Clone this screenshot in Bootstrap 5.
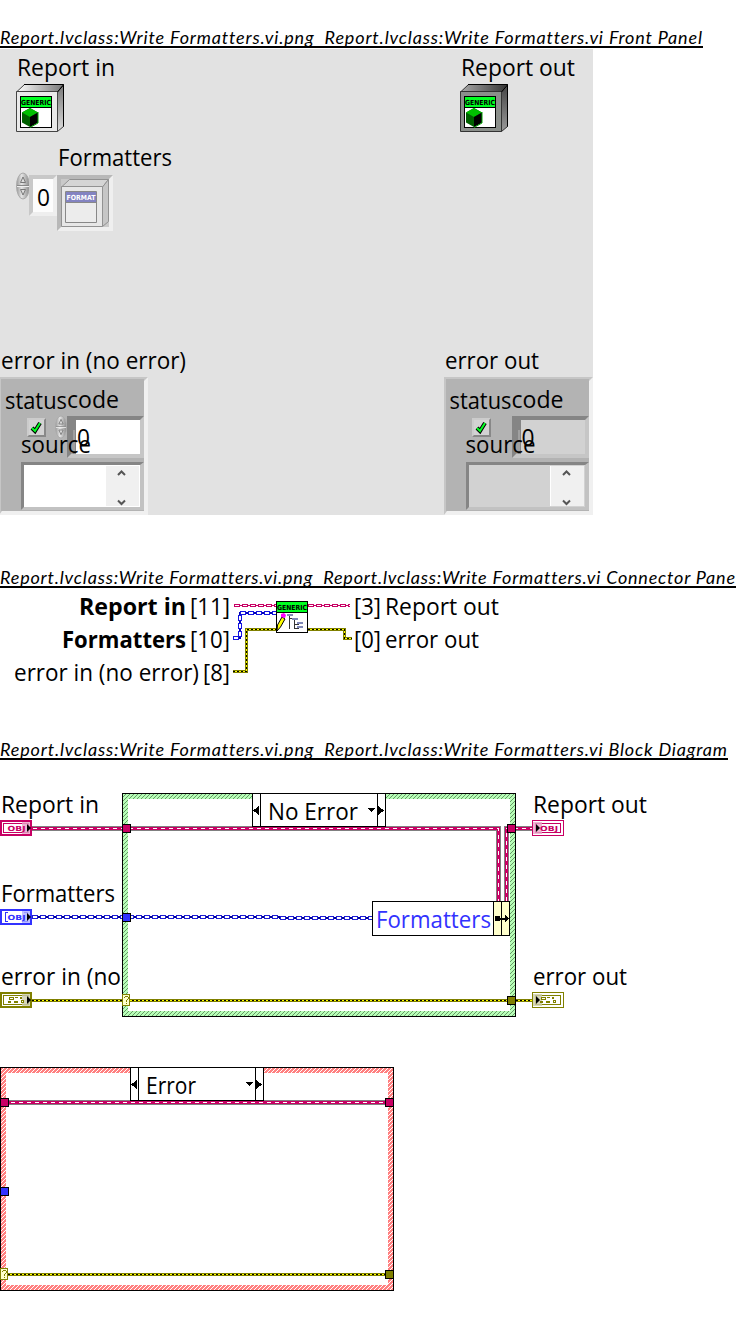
<!DOCTYPE html>
<html lang="en">
<head>
<meta charset="utf-8">
<meta name="viewport" content="width=device-width, initial-scale=1">
<title>Report.lvclass:Write Formatters.vi</title>
<link rel="stylesheet" href="https://cdn.jsdelivr.net/npm/bootstrap@5.3.0/dist/css/bootstrap.min.css">
<style>
body{background:#fff;color:#000;font-family:"Open Sans","Noto Sans",sans-serif}
.vi-title{font:italic 400 18px/24px Lato,"Liberation Sans",sans-serif;height:23px;border-bottom:2px solid #000;white-space:pre}
.vi-title svg{display:block;height:21px}
.gap-top{padding-top:25px}
.gap-pane{padding-top:50px}
.gap-diagram{padding-top:44px}
svg text{font-size:23px;fill:#000;font-variant-ligatures:none}
svg .bold{font-weight:700}
svg .heading{font:italic 400 18px Lato,"Liberation Sans",sans-serif;font-variant-ligatures:none}
svg .tiny{font:700 7px "DejaVu Sans",sans-serif}
.px{shape-rendering:crispEdges}
</style>
</head>
<body>
<svg width="0" height="0" class="position-absolute" aria-hidden="true">
<defs>
<linearGradient id="topLight" x1="0" x2="1"><stop stop-color="#fff"/><stop offset="1" stop-color="#777"/></linearGradient>
<linearGradient id="sideLight" x1="0" x2="0" y1="0" y2="1"><stop stop-color="#777"/><stop offset="1" stop-color="#ddd"/></linearGradient>
<linearGradient id="topDark" x1="0" x2="1"><stop stop-color="#aaa"/><stop offset="1" stop-color="#333"/></linearGradient>
<linearGradient id="sideDark" x1="0" x2="0" y1="0" y2="1"><stop stop-color="#444"/><stop offset="1" stop-color="#999"/></linearGradient>
<linearGradient id="knob" x1="0" x2="1"><stop stop-color="#999"/><stop offset=".4" stop-color="#e4e4e4"/><stop offset="1" stop-color="#888"/></linearGradient>
<pattern id="okHatch" width="4" height="4" patternUnits="userSpaceOnUse" class="px"><path fill="#b8ffb8" d="M0 0h4v4H0z"/><path fill="#669966" d="M3 0h1v1H3zM2 1h1v1H2zM1 2h1v1H1zM0 3h1v1H0z"/></pattern>
<pattern id="errHatch" width="4" height="4" patternUnits="userSpaceOnUse" class="px"><path fill="#ff8080" d="M0 0h4v4H0z"/><path fill="#fff" d="M3 0h1v1H3zM2 1h1v1H2zM1 2h1v1H1zM0 3h1v1H0z"/></pattern>
<g id="label">
  <path d="M.5.5h31v31H.5z" fill="#fff" stroke="#000" class="px"/><path d="M1 1h30v10H1z" fill="#00ff21" class="px"/><path d="M1 11.500h30" stroke="#000" class="px"/>
  <text class="tiny" x="1" y="9" textLength="30" lengthAdjust="spacingAndGlyphs">GENERIC</text>
</g>
<g id="cube"><path d="M10 12l8 4.500v10L10 31l-8-4.500v-10z" fill="#006000"/><path d="M10 12l8 4.500-8 4.500-8-4.500z" fill="#00c000"/><path d="M10 21l8-4.500v10L10 31z" fill="#000"/><path d="M18 16v11l-8 4.500" fill="none" stroke="#00a000"/></g>
<g id="spinner"><ellipse cx="0" cy="0" rx="6.500" ry="13" fill="url(#knob)" stroke="#aaa"/><path d="M-6-.5H6" stroke="#888"/><path d="M-6 .5H6" stroke="#eee"/><path d="M-2.500-3.500L0-9l2.500 5.500zM-2.500 3.500L0 9l2.500-5.500z" fill="#ddd" stroke="#777"/></g>
<g id="cluster">
  <path d="M-1 377h149v138H-1z" fill="#f0f0f0"/><path d="M-1 377h149l-4 4v130H2l-3 4z" fill="#c6c6c6"/><path d="M1 379h143v132H1z" fill="#b3b3b3"/>
  <path d="M67 416h77v42H67z" fill="#c6c6c6"/><path d="M67 416h77l-4 4H76v34h-5l-4 4z" fill="#858585"/>
  <path d="M21 462h123v48H21z" fill="#c2c2c2"/><path d="M21 462h123l-4 3H24v42l-3 3z" fill="#858585"/>
  <path d="M27 418h19v19H27z" fill="#888"/><path d="M27 418h19l-2 2v15H29l-2 2z" fill="#ccc"/><path d="M29 420h15v15H29z" fill="#d3d3d3"/>
  <path d="M32 428l3 3 5-8" stroke="#000" stroke-width="4" fill="none"/><path d="M32 428l3 3 5-8" stroke="#00ff21" stroke-width="2" fill="none"/>
  <path d="M72 454v-12M74 452v-22" stroke="#bbb"/>
</g>
<g id="scroll"><path d="M106 466h33v40h-33z" fill="#f0f0f0"/><path d="M118 475l3.500-3.500 3.500 3.500M118 500.500l3.500 3.500 3.500-3.500" stroke="#555" stroke-width="2" fill="none"/></g>
<g id="query" class="px"><path d="M.5.5h7v11h-7z" fill="#ffffcc" stroke="#808000"/><path d="M2 3h1V2h3v1h1v2H6v1H5v2H4V6h1V5h1V3H3v1H2zM4 9h1v1H4z" fill="#808000"/></g>
<g id="selector"><path d="M.5.5h133v33H.5zM8.500.5v33M125.500.5v33" fill="#fff" stroke="#000"/><path d="M7 13v9l-6-4.500zM126 13v9l6-4.500zM115 15h8l-4 4z" fill="#000"/></g>
<g id="errGlyph" class="px" fill="#808000"><path d="M9 5h5v3H9zM15 5h3v1h-3zM20 5h2v2h-2zM8 9h3v2H8zM14 9h4v2h-4zM21 8h3v3h-3z"/><path d="M10 6h3v1h-3zM22 9h1v1h-1z" fill="#fff"/></g>
</defs>
</svg>
<main>
<section class="gap-top">
<h1 class="vi-title m-0" style="width:703px"><svg width="703" height="21"><text class="heading" x="0" y="19" textLength="702" xml:space="preserve">Report.lvclass:Write Formatters.vi.png  Report.lvclass:Write Formatters.vi Front Panel</text></svg></h1>
<svg class="d-block" style="margin-top:1px" width="593" height="466" viewBox="0 49 593 466">
<path fill="#e2e2e2" d="M0 49h593v466H0z"/>
<text x="17" y="76" textLength="98" lengthAdjust="spacingAndGlyphs">Report in</text>
<text x="461" y="76" textLength="114" lengthAdjust="spacingAndGlyphs">Report out</text>
<g stroke="#444"><path d="M16.500 92l8-7.500h39l-6 7.500z" fill="url(#topLight)"/><path d="M57.500 92l6-7.500v42l-6 5z" fill="url(#sideLight)"/><path d="M16.500 91.500h41v40h-41z" fill="#eaeaea"/></g><path d="M24 84.500h39.500v42M57.500 92l6-7" stroke="#000" fill="none"/>
<use href="#label" x="20" y="96"/><use href="#cube" x="20" y="96"/>
<g transform="translate(444)"><g stroke="#333"><path d="M16.500 92l8-7.500h39l-6 7.500z" fill="url(#topDark)"/><path d="M57.500 92l6-7.500v42l-6 5z" fill="url(#sideDark)"/><path d="M16.500 91.500h41v40h-41z" fill="#8b8f8b"/></g><path d="M24 84.500h39.500v42M57.500 92l6-7" stroke="#000" fill="none"/><use href="#label" x="20" y="96"/><use href="#cube" x="20" y="96"/></g>
<text x="58" y="166" textLength="114" lengthAdjust="spacingAndGlyphs">Formatters</text>
<use href="#spinner" x="23" y="186"/>
<path d="M29 175h28v41H29z" fill="#eee"/><path d="M29 175h28l-4 4H33v33l-4 4z" fill="#c8c8c8"/><path d="M33 179h20v33H33z" fill="#fcfcfc"/>
<path d="M57 175h56v56H57z" fill="#efefef"/><path d="M57 175h56l-4 4v48H61l-4 4z" fill="#b8b8b8"/><path d="M61 179h48v48H61z" fill="#c9c9c9"/>
<g stroke="#929292"><path d="M61.500 187l8-7.500h39l-6 7.500z" fill="#d5d5d5"/><path d="M102.500 187l6-7.500v42l-6 5z" fill="#c6c6c6"/><path d="M61.500 186.500h41v40h-41z" fill="#e7e7e7"/><path d="M65.500 191.500h31v31h-31z" fill="#ececec" stroke="#888"/></g>
<path d="M66 192h30v10H66z" fill="#8383c1"/><path d="M66 202.500h30" stroke="#888"/><text class="tiny" x="66.500" y="199.500" textLength="29" lengthAdjust="spacingAndGlyphs" style="fill:#fff">FORMAT</text>
<text x="37" y="206" textLength="13" lengthAdjust="spacingAndGlyphs">0</text>
<text x="1" y="369" textLength="185" lengthAdjust="spacingAndGlyphs">error in (no error)</text>
<text x="445" y="369" textLength="94" lengthAdjust="spacingAndGlyphs">error out</text>
<use href="#cluster"/><path d="M76 420h64v34H76zM24 465h116v42H24z" fill="#fff"/><use href="#scroll"/><use href="#spinner" transform="translate(61 427) scale(.85)"/>
<use href="#cluster" x="445"/><path d="M521 420h64v34h-64zM469 465h116v42H469z" fill="#d2d2d2"/><use href="#scroll" x="445"/>
<path d="M550.500 466v40" stroke="#fff"/>
<g><text x="5" y="409" textLength="62" lengthAdjust="spacingAndGlyphs">status</text><text x="67" y="408" textLength="52" lengthAdjust="spacingAndGlyphs">code</text><text x="77" y="446" textLength="13" lengthAdjust="spacingAndGlyphs">0</text><text x="21" y="453" textLength="70" lengthAdjust="spacingAndGlyphs">source</text></g>
<g transform="translate(444.500)"><text x="5" y="409" textLength="62" lengthAdjust="spacingAndGlyphs">status</text><text x="67" y="408" textLength="52" lengthAdjust="spacingAndGlyphs">code</text><text x="77" y="446" textLength="13" lengthAdjust="spacingAndGlyphs">0</text><text x="21" y="453" textLength="70" lengthAdjust="spacingAndGlyphs">source</text></g>
</svg>
</section>
<section class="gap-pane">
<h1 class="vi-title m-0" style="width:736px"><svg width="736" height="21"><text class="heading" x="0" y="19" textLength="735" xml:space="preserve">Report.lvclass:Write Formatters.vi.png  Report.lvclass:Write Formatters.vi Connector Pane</text></svg></h1>
<svg class="d-block" width="737" height="105" viewBox="0 588 737 105">
<text class="bold" x="79" y="615" textLength="107" lengthAdjust="spacingAndGlyphs">Report in</text><text x="190" y="615" textLength="40" lengthAdjust="spacingAndGlyphs">[11]</text>
<text class="bold" x="62" y="648" textLength="124" lengthAdjust="spacingAndGlyphs">Formatters</text><text x="190" y="648" textLength="40" lengthAdjust="spacingAndGlyphs">[10]</text>
<text x="14" y="681" textLength="185" lengthAdjust="spacingAndGlyphs">error in (no error)</text><text x="203" y="681" textLength="27" lengthAdjust="spacingAndGlyphs">[8]</text>
<text x="354" y="615" textLength="27" lengthAdjust="spacingAndGlyphs">[3]</text><text x="385" y="615" textLength="114" lengthAdjust="spacingAndGlyphs">Report out</text>
<text x="354" y="648" textLength="27" lengthAdjust="spacingAndGlyphs">[0]</text><text x="385" y="648" textLength="94" lengthAdjust="spacingAndGlyphs">error out</text>
<g class="px" fill="none">
<path d="M234 605.500h42M308 605.500h42" stroke="#c80064"/><path d="M234 605.500h42M308 605.500h42" stroke="#c80064" stroke-width="3" stroke-dasharray="6 2"/><path d="M235 605.500h41M309 605.500h41" stroke="#fff" stroke-dasharray="4 4"/>
<path d="M233 638h7v-25H276" stroke="#0000b4" stroke-width="2"/><path d="M233 638h7v-25H276" stroke="#1414e0" stroke-width="4" stroke-dasharray="6 2"/><path d="M234 638h6v-25H276" stroke="#fff" stroke-width="2" stroke-dasharray="4 4"/>
<path d="M233 671.500h13.500v-42H276M308 629.500h36.500v9h7" stroke="#808000" stroke-width="3"/><path d="M233 671.500h13.500v-42H276M308 629.500h36.500v9h7" stroke="#ff0"/><path d="M233 671.500h13.500v-42H276M308 629.500h36.500v9h7" stroke="#000" stroke-dasharray="2 2"/>
</g>
<use href="#label" x="276" y="601"/>
<path d="M277 631l.5-6 4.500-8 3 2-4.500 8z" fill="#ff0" stroke="#000"/><path d="M281 614l3-1 2 2-1 3-4-1z" fill="#f0f"/>
<path class="px" d="M289.500 616v13M289.500 618.500h5M294.500 620v8h4M294.500 624.500h4" fill="none" stroke="#333"/><path class="px" d="M287.500 614.500h5v1h-5zM292.500 618.500h5v1h-5zM297.500 622.500h5v1h-5zM297.500 626.500h5v1h-5z" fill="#c8d0ff" stroke="#8088b8"/>
</svg>
</section>
<section class="gap-diagram">
<h1 class="vi-title m-0" style="width:728px"><svg width="728" height="21"><text class="heading" x="0" y="19" textLength="727" xml:space="preserve">Report.lvclass:Write Formatters.vi.png  Report.lvclass:Write Formatters.vi Block Diagram</text></svg></h1>
<svg class="d-block" width="737" height="570" viewBox="0 760 737 570">
<text x="1" y="813" textLength="98" lengthAdjust="spacingAndGlyphs">Report in</text>
<text x="1" y="902" textLength="114" lengthAdjust="spacingAndGlyphs">Formatters</text>
<text x="1" y="985" textLength="120" lengthAdjust="spacingAndGlyphs">error in (no</text>
<text x="533" y="813" textLength="114" lengthAdjust="spacingAndGlyphs">Report out</text>
<text x="533" y="985" textLength="94" lengthAdjust="spacingAndGlyphs">error out</text>
<g class="px">
<path d="M122.500 793.500h393v223h-393z" fill="url(#okHatch)" stroke="#000"/><path d="M128 799h382v212H128z" fill="#fff"/>
<path d="M.5 1067.500h393v223H.5z" fill="url(#errHatch)" stroke="#000"/><path d="M6 1073h382v212H6z" fill="#fff"/>
<g fill="none">
<path d="M32 828.500h466.500V901M506.500 901v-72.500H532M8 1102.500h380" stroke="#808080" stroke-width="5"/><path d="M32 828.500h466.500V901M506.500 901v-72.500H532M8 1102.500h380" stroke="#c80064" stroke-width="3"/><path d="M33 828.500h465.500V901M506.500 901v-72.500H532M11 1102.500h377" stroke="#fff" stroke-dasharray="4 4"/>
<path d="M32 917h248v1h92" stroke="#000096" stroke-width="2"/><path d="M32 917h248M280 918h92" stroke="#1e1ed2" stroke-width="4" stroke-dasharray="6 2"/><path d="M33 917h247M281 918h91" stroke="#fff" stroke-width="2" stroke-dasharray="4 4"/>
<path d="M32 1000.500h500M8 1274.500h380" stroke="#808000" stroke-width="3"/><path d="M32 1000.500h500M8 1274.500h380" stroke="#ff0"/><path d="M32 1000.500h500M8 1274.500h380" stroke="#000" stroke-dasharray="2 2"/>
</g>
<g stroke="#000"><path d="M122.500 824.500h8v8h-8zM507.500 824.500h8v8h-8zM.5 1098.500h8v8h-8zM385.500 1098.500h8v8h-8z" fill="#c80064"/><path d="M122.500 913.500h8v8h-8zM.5 1187.500h8v8h-8z" fill="#3232ff"/><path d="M507.500 996.500h8v8h-8zM385.500 1270.500h8v8h-8z" fill="#808000"/></g>
<use href="#query" x="122" y="994"/><use href="#query" x="0" y="1268"/>
<use href="#selector" x="252" y="793"/><use href="#selector" x="130" y="1067"/>
<path d="M372.500 901.500h137v34h-137z" fill="#fff" stroke="#000"/><path d="M493.500 901.500h8v34h-8zM501.500 901.500h8v34h-8z" fill="#ffffcc" stroke="#000"/><path d="M495 916h5v5h-5zM499 917.500h6v-3l4 4-4 4v-3h-6z" fill="#000"/>
<g fill="#fff"><path d="M1 821h30v14H1z" stroke="#c80064" stroke-width="2"/><path d="M3.500 823.500h25v9h-25z" stroke="#c80064"/><path d="M1 910h30v14H1z" stroke="#3232ff" stroke-width="2"/><path d="M1 993h30v14H1z" stroke="#808000" stroke-width="2"/><path d="M3.500 995.500h25v9h-25zM532.500 992.500h31v15h-31zM535.500 995.500h25v9h-25z" stroke="#808000"/><path d="M532.500 820.500h31v15h-31zM535.500 823.500h25v9h-25z" stroke="#c80064"/></g>
<path d="M8 912.500H5.500v9H8M24 912.500h3v9h-3" fill="none" stroke="#3232ff"/>
</g>
<path d="M22 822h8v12h-8zM533 822h9v12h-9z" fill="#e9a5c8" opacity=".8"/><path d="M22 911h8v12h-8z" fill="#b0b0ff" opacity=".8"/><path d="M22 994h8v12h-8zM533 994h9v12h-9z" fill="#ccccaa" opacity=".8"/>
<use href="#errGlyph" y="992"/><use href="#errGlyph" x="532" y="992"/>
<text class="tiny" x="7.500" y="831" textLength="18" lengthAdjust="spacingAndGlyphs" style="fill:#c80064">OBJ</text><text class="tiny" x="7.500" y="920" textLength="18" lengthAdjust="spacingAndGlyphs" style="fill:#3232ff">OBJ</text><text class="tiny" x="540" y="831" textLength="18" lengthAdjust="spacingAndGlyphs" style="fill:#c80064">OBJ</text>
<path d="M27 824v8l4-4zM27 913v8l4-4zM27 996v8l4-4zM536 824v8l4-4zM536 996v8l4-4z"/>
<text x="268" y="820" textLength="90" lengthAdjust="spacingAndGlyphs">No Error</text><text x="146" y="1094" textLength="50" lengthAdjust="spacingAndGlyphs">Error</text>
<text x="376" y="928" textLength="115" lengthAdjust="spacingAndGlyphs" style="fill:#3232ff">Formatters</text>
</svg>
</section>
</main>
<script src="https://cdn.jsdelivr.net/npm/bootstrap@5.3.0/dist/js/bootstrap.bundle.min.js"></script>
</body>
</html>
